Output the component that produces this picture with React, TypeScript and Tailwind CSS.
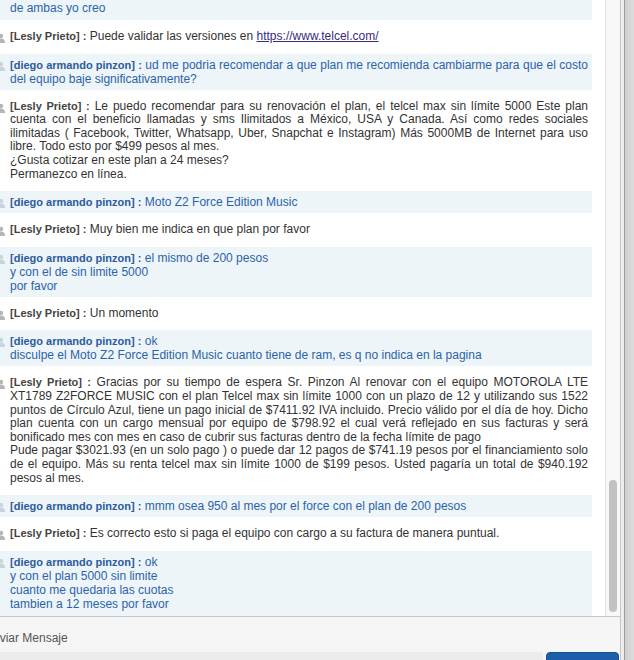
import type { ReactNode } from "react";

type Who = "agent" | "client";

function UserIcon({ color }: { color: string }) {
  return (
    <svg
      width="10"
      height="10"
      viewBox="0 0 10 10"
      className="absolute left-[-4px] top-[7px]"
      fill={color}
    >
      <circle cx="5" cy="3" r="2.2" />
      <path d="M1 10 C1 6.5 3 5.6 5 5.6 C7 5.6 9 6.5 9 10 Z" />
    </svg>
  );
}

function Message({ who, children }: { who: Who; children: ReactNode }) {
  const client = who === "client";
  return (
    <div
      className={
        client
          ? "relative bg-[#eef5f9] pl-[10px] pr-[4px] py-[4px] leading-[14px] text-[#2b63aa] text-justify"
          : "relative pl-[10px] pr-[4px] py-[4px] leading-[13.6px] text-[#333] text-justify"
      }
    >
      <UserIcon color={client ? "#c9d3dc" : "#b5b5b5"} />
      <span
        className={
          client
            ? "text-[11px] font-bold text-[#2a5b9e]"
            : "text-[11px] font-bold text-[#444]"
        }
      >
        {client ? "[diego armando pinzon] :" : "[Lesly Prieto] :"}
      </span>{" "}
      {children}
    </div>
  );
}

export default function App() {
  return (
    <div className="w-[634px] h-[660px] overflow-hidden flex bg-white font-['Liberation_Sans',Arial,sans-serif] text-[12px]">
      <div className="w-[621px] flex flex-col border-r border-[#c6c6c6]">
        <div className="h-[617px] flex border-b border-[#c8c8cc] bg-white">
          <div className="w-[605px] overflow-hidden pr-[13px]">
            <div className="flex flex-col gap-[6px]">
              <div className="bg-[#eef5f9] pl-[10px] pt-[1px] pb-[5px] leading-[14px] text-[#2b63aa]">
                de ambas yo creo
              </div>
              <Message who="agent">
                Puede validar las versiones en{" "}
                <span className="underline text-[#3a2a7c]">https://www.telcel.com/</span>
              </Message>
              <Message who="client">
                ud me podria recomendar a que plan me recomienda cambiarme para que el costo del
                equipo baje significativamente?
              </Message>
              <Message who="agent">
                Le puedo recomendar para su renovación el plan, el telcel max sin límite 5000 Este
                plan cuenta con el beneficio llamadas y sms Ilimitados a México, USA y Canada. Así
                como redes sociales ilimitadas ( Facebook, Twitter, Whatsapp, Uber, Snapchat e
                Instagram) Más 5000MB de Internet para uso libre. Todo esto por $499 pesos al mes.
                <br />
                ¿Gusta cotizar en este plan a 24 meses?
                <br />
                Permanezco en línea.
              </Message>
              <Message who="client">Moto Z2 Force Edition Music</Message>
              <Message who="agent">Muy bien me indica en que plan por favor</Message>
              <Message who="client">
                el mismo de 200 pesos
                <br />
                y con el de sin limite 5000
                <br />
                por favor
              </Message>
              <Message who="agent">Un momento</Message>
              <Message who="client">
                ok
                <br />
                disculpe el Moto Z2 Force Edition Music cuanto tiene de ram, es q no indica en la
                pagina
              </Message>
              <Message who="agent">
                Gracias por su tiempo de espera Sr. Pinzon Al renovar con el equipo MOTOROLA LTE
                XT1789 Z2FORCE MUSIC con el plan Telcel max sin límite 1000 con un plazo de 12 y
                utilizando sus 1522 puntos de Círculo Azul, tiene un pago inicial de $7411.92 IVA
                incluido. Precio válido por el día de hoy. Dicho plan cuenta con un cargo mensual
                por equipo de $798.92 el cual verá reflejado en sus facturas y será bonificado mes
                con mes en caso de cubrir sus facturas dentro de la fecha límite de pago
                <br />
                Pude pagar $3021.93 (en un solo pago ) o puede dar 12 pagos de $741.19 pesos por el
                financiamiento solo de el equipo. Más su renta telcel max sin límite 1000 de $199
                pesos. Usted pagaría un total de $940.192 pesos al mes.
              </Message>
              <Message who="client">mmm osea 950 al mes por el force con el plan de 200 pesos</Message>
              <Message who="agent">
                Es correcto esto si paga el equipo con cargo a su factura de manera puntual.
              </Message>
              <Message who="client">
                ok
                <br />
                y con el plan 5000 sin limite
                <br />
                cuanto me quedaria las cuotas
                <br />
                tambien a 12 meses por favor
                <br />
                <br />
              </Message>
            </div>
          </div>
          <div className="w-[15px] border-l border-[#e2e2e2] bg-[#f8f8f8] flex flex-col">
            <div className="mt-[480px] mx-auto w-[8px] h-[132px] rounded-full bg-[#c1c1c1]" />
          </div>
        </div>
        <div className="flex-1 bg-[#f5f5f5] flex flex-col">
          <div className="mt-[14px] ml-[-15px] leading-[14px] text-[#555]">Enviar Mensaje</div>
          <div className="mt-[7px] flex gap-[3px] items-start">
            <div className="w-[543px] h-[20px] bg-[#ececec]" />
            <div className="w-[73px] h-[20px] rounded-[4px] bg-[#1c5ea9] border border-[#174f8f]" />
          </div>
        </div>
      </div>
      <div className="w-[3px] bg-[#ededed]" />
      <div className="w-[1px] bg-[#9c9c9c]" />
      <div className="flex-1 bg-gradient-to-r from-[#cfcfcf] to-[#dcdcdc]" />
    </div>
  );
}
